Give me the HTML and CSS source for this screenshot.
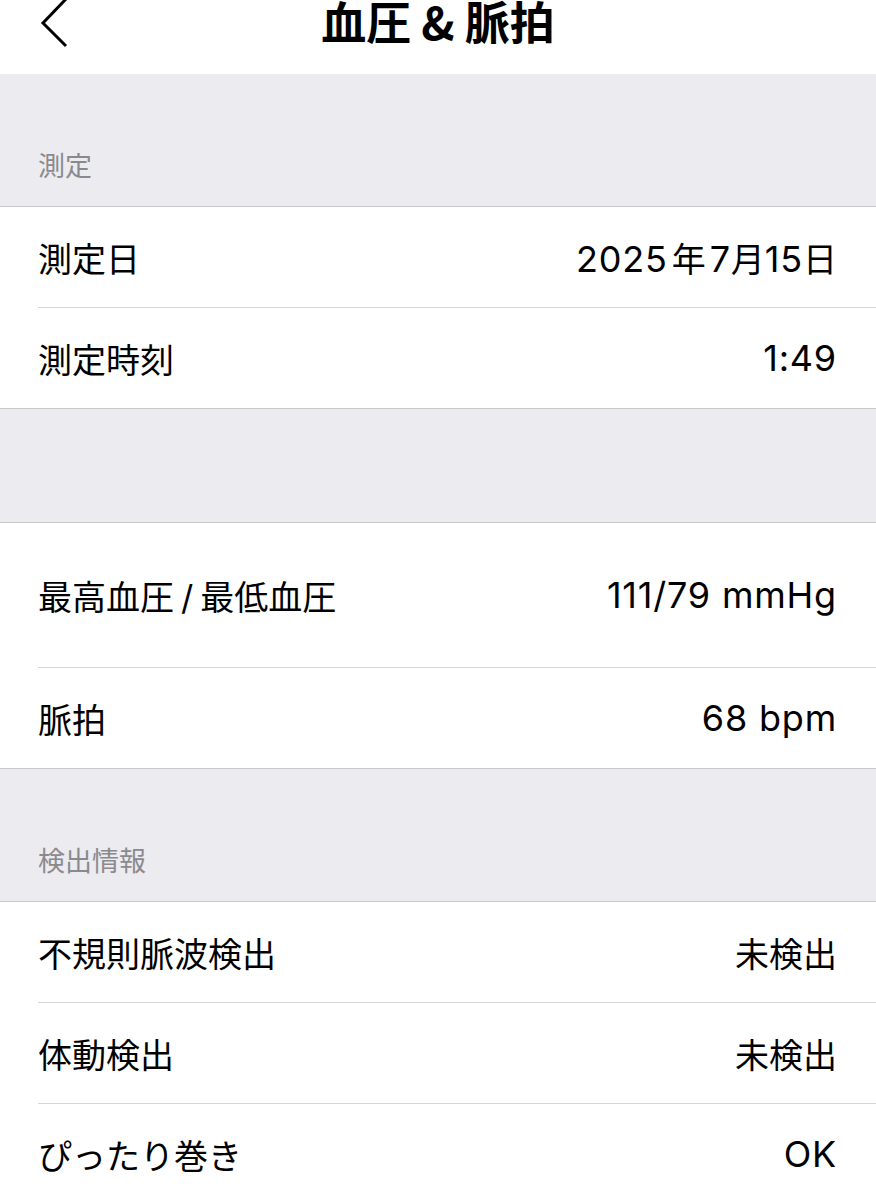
FILE: index.html
```html
<!DOCTYPE html>
<html lang="ja">
<head>
  <meta charset="UTF-8" />
  <title>血圧 & 脈拍</title>
  <meta name="viewport" content="width=device-width, initial-scale=1.0" />
  <link rel="stylesheet" href="styles.css">
</head>
<body>
  <header class="nav">
    <a class="back" href="#" aria-label="戻る">
      <svg width="40" height="50" viewBox="0 0 40 50">
        <polyline points="26,-1 3,23 26,46" fill="none" stroke="#000" stroke-width="3" />
      </svg>
    </a>
    <h1 class="nav-title">血圧 &amp; 脈拍</h1>
  </header>

  <div class="group-header">測定</div>
  <ul class="list">
    <li class="row"><div class="cell"><span>測定日</span><span><span class="num">2025</span><span class="gap">年</span><span class="num">7</span>月<span class="num">15</span>日</span></div></li>
    <li class="row"><div class="cell"><span>測定時刻</span><span class="num">1:49</span></div></li>
  </ul>

  <div class="group-header short"></div>
  <ul class="list">
    <li class="row tall"><div class="cell"><span>最高血圧<span class="slash">/</span>最低血圧</span><span class="num">111/79 mmHg</span></div></li>
    <li class="row"><div class="cell"><span>脈拍</span><span class="num">68 bpm</span></div></li>
  </ul>

  <div class="group-header">検出情報</div>
  <ul class="list">
    <li class="row"><div class="cell"><span>不規則脈波検出</span><span>未検出</span></div></li>
    <li class="row"><div class="cell"><span>体動検出</span><span>未検出</span></div></li>
    <li class="row"><div class="cell"><span>ぴったり巻き</span><span class="num">OK</span></div></li>
  </ul>
</body>
</html>
```

FILE: styles.css
```css
body {
  margin: 0;
  background: #fff;
  font-family: Inter, "Noto Sans CJK JP", sans-serif;
  color: #000;
}
.nav {
  height: 74px;
  display: flex;
  justify-content: center;
  align-items: flex-start;
  position: relative;
  background: #fff;
  overflow: hidden;
}
.back {
  position: absolute;
  left: 40px;
  top: 0;
  display: block;
}
.nav-title {
  margin: 0;
  font-size: 45px;
  line-height: 42px;
  font-weight: 700;
  font-family: "Noto Sans CJK JP", sans-serif;
}
.group-header {
  height: 132px;
  background: #ebebf0;
  display: flex;
  align-items: flex-end;
  padding: 0 38px 22px;
  box-sizing: border-box;
  font-size: 27px;
  color: #8a8a8e;
}
.group-header.short {
  height: 113px;
}
.list {
  list-style: none;
  margin: 0;
  padding: 0;
  border-top: 1px solid #c8c7cc;
  border-bottom: 1px solid #c8c7cc;
}
.row {
  padding-left: 38px;
}
.cell {
  height: 100px;
  display: flex;
  justify-content: space-between;
  align-items: center;
  padding-right: 39px;
  border-bottom: 1px solid #d6d6d9;
  font-size: 34px;
}
.row:last-child .cell {
  border-bottom: none;
}
.row.tall .cell {
  height: 144px;
}
.num {
  font-size: 36px;
  letter-spacing: 0.8px;
}
.gap {
  margin: 0 4px;
}
.slash {
  margin: 0 7px;
}
```
